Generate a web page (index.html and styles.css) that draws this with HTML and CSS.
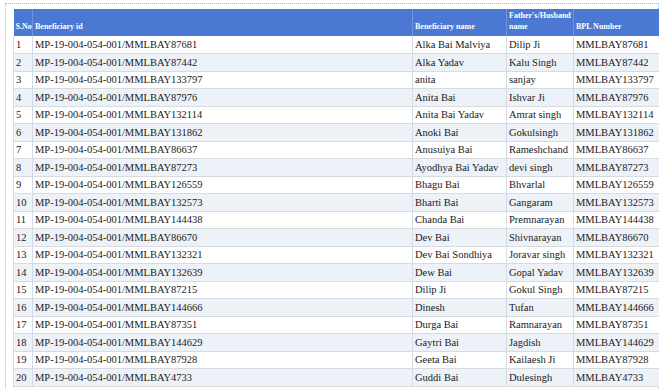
FILE: index.html
```html
<!DOCTYPE html>
<html>
<head>
<meta charset="utf-8">
<link rel="stylesheet" href="styles.css">
</head>
<body>
<div class="page">
  <div class="frame">
    <table class="grid">
      <colgroup>
        <col class="c-sno"><col class="c-id"><col class="c-name"><col class="c-father"><col class="c-bpl">
      </colgroup>
      <thead>
        <tr><th>S.No</th><th>Beneficiary id</th><th>Beneficiary name</th><th>Father's/Husband name</th><th>BPL Number</th></tr>
      </thead>
      <tbody>
        <tr><td>1</td><td>MP-19-004-054-001/MMLBAY87681</td><td>Alka Bai Malviya</td><td>Dilip Ji</td><td>MMLBAY87681</td></tr>
        <tr><td>2</td><td>MP-19-004-054-001/MMLBAY87442</td><td>Alka Yadav</td><td>Kalu Singh</td><td>MMLBAY87442</td></tr>
        <tr><td>3</td><td>MP-19-004-054-001/MMLBAY133797</td><td>anita</td><td>sanjay</td><td>MMLBAY133797</td></tr>
        <tr><td>4</td><td>MP-19-004-054-001/MMLBAY87976</td><td>Anita Bai</td><td>Ishvar Ji</td><td>MMLBAY87976</td></tr>
        <tr><td>5</td><td>MP-19-004-054-001/MMLBAY132114</td><td>Anita Bai Yadav</td><td>Amrat singh</td><td>MMLBAY132114</td></tr>
        <tr><td>6</td><td>MP-19-004-054-001/MMLBAY131862</td><td>Anoki Bai</td><td>Gokulsingh</td><td>MMLBAY131862</td></tr>
        <tr><td>7</td><td>MP-19-004-054-001/MMLBAY86637</td><td>Anusuiya Bai</td><td>Rameshchand</td><td>MMLBAY86637</td></tr>
        <tr><td>8</td><td>MP-19-004-054-001/MMLBAY87273</td><td>Ayodhya Bai Yadav</td><td>devi singh</td><td>MMLBAY87273</td></tr>
        <tr><td>9</td><td>MP-19-004-054-001/MMLBAY126559</td><td>Bhagu Bai</td><td>Bhvarlal</td><td>MMLBAY126559</td></tr>
        <tr><td>10</td><td>MP-19-004-054-001/MMLBAY132573</td><td>Bharti Bai</td><td>Gangaram</td><td>MMLBAY132573</td></tr>
        <tr><td>11</td><td>MP-19-004-054-001/MMLBAY144438</td><td>Chanda Bai</td><td>Premnarayan</td><td>MMLBAY144438</td></tr>
        <tr><td>12</td><td>MP-19-004-054-001/MMLBAY86670</td><td>Dev Bai</td><td>Shivnarayan</td><td>MMLBAY86670</td></tr>
        <tr><td>13</td><td>MP-19-004-054-001/MMLBAY132321</td><td>Dev Bai Sondhiya</td><td>Joravar singh</td><td>MMLBAY132321</td></tr>
        <tr><td>14</td><td>MP-19-004-054-001/MMLBAY132639</td><td>Dew Bai</td><td>Gopal Yadav</td><td>MMLBAY132639</td></tr>
        <tr><td>15</td><td>MP-19-004-054-001/MMLBAY87215</td><td>Dilip Ji</td><td>Gokul Singh</td><td>MMLBAY87215</td></tr>
        <tr><td>16</td><td>MP-19-004-054-001/MMLBAY144666</td><td>Dinesh</td><td>Tufan</td><td>MMLBAY144666</td></tr>
        <tr><td>17</td><td>MP-19-004-054-001/MMLBAY87351</td><td>Durga Bai</td><td>Ramnarayan</td><td>MMLBAY87351</td></tr>
        <tr><td>18</td><td>MP-19-004-054-001/MMLBAY144629</td><td>Gaytri Bai</td><td>Jagdish</td><td>MMLBAY144629</td></tr>
        <tr><td>19</td><td>MP-19-004-054-001/MMLBAY87928</td><td>Geeta Bai</td><td>Kailaesh Ji</td><td>MMLBAY87928</td></tr>
        <tr><td>20</td><td>MP-19-004-054-001/MMLBAY4733</td><td>Guddi Bai</td><td>Dulesingh</td><td>MMLBAY4733</td></tr>
      </tbody>
    </table>
  </div>
</div>
</body>
</html>
```

FILE: styles.css
```css
html, body {
  margin: 0;
  padding: 0;
  background: #ffffff;
}
.page {
  padding: 3px 0 0 5px;
  font-family: "Liberation Serif", "Times New Roman", serif;
}
.frame {
  width: 654px;
  border-top: 1px dotted #9dbbe3;
  border-left: 1px dotted #9dbbe3;
  border-right: 1px dotted #9dbbe3;
  padding: 5px 0 0 7px;
  height: 400px;
  box-sizing: border-box;
}
.grid {
  border-collapse: collapse;
  table-layout: fixed;
  width: 645px;
  font-size: 10.5px;
  color: #1a1a1a;
}
.c-sno { width: 19px; }
.c-id { width: 380px; }
.c-name { width: 94px; }
.c-father { width: 67px; }
.c-bpl { width: 85px; }
.grid th {
  background: #4a78d3;
  color: #ffffff;
  font-weight: bold;
  font-size: 8px;
  line-height: 11px;
  text-align: left;
  vertical-align: bottom;
  height: 27px;
  padding: 0 1px 4px 2px;
  border-left: 1px solid #7095da;
  box-sizing: border-box;
}
.grid th:first-child { border-left: none; }
.grid td {
  height: 17.5px;
  padding: 0 2px;
  white-space: nowrap;
  overflow: hidden;
  border-left: 1px solid #d3dce6;
  border-bottom: 1px solid #d6dbe0;
  box-sizing: border-box;
}
.grid td:first-child { border-left: 1px solid #d3dce6; }
.grid tbody tr:nth-child(even) td { background: #edf2f8; }
.grid tbody tr:nth-child(odd) td { background: #ffffff; }
```
